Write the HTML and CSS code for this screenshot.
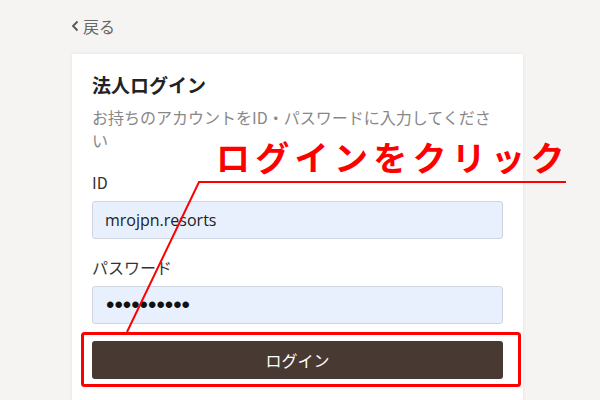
FILE: index.html
```html
<!DOCTYPE html>
<html lang="ja">
<head>
<meta charset="utf-8">
<link rel="stylesheet" href="styles.css">
</head>
<body>
<div class="page">
  <a class="back" href="#"><svg class="chev" width="8" height="12" viewBox="0 0 8 12"><path d="M6.5 1.5 L2 6 L6.5 10.5" fill="none" stroke="#555" stroke-width="1.8"/></svg><span>戻る</span></a>
  <div class="card">
    <h1 class="title">法人ログイン</h1>
    <p class="desc">お持ちのアカウントをID・パスワードに入力してください</p>
    <label class="label">ID</label>
    <div class="input">mrojpn.resorts</div>
    <label class="label pw">パスワード</label>
    <div class="input dots">••••••••••</div>
    <div class="btnwrap"><button class="btn">ログイン</button></div>
  </div>
</div>
<div class="note">ログインをクリック</div>
<svg class="overlay" width="600" height="400" viewBox="0 0 600 400">
  <polyline points="566,182 199,182 127,332" fill="none" stroke="#ff0000" stroke-width="2"/>
  <rect x="82.5" y="333.5" width="437" height="52" rx="2" fill="none" stroke="#ff0000" stroke-width="3"/>
</svg>
</body>
</html>
```
FILE: styles.css
```css
html, body {
  margin: 0;
  padding: 0;
}
body {
  width: 600px;
  height: 400px;
  overflow: hidden;
  background: #f5f4f2;
  font-family: "Noto Sans CJK JP", "Open Sans", sans-serif;
  color: #333;
  position: relative;
}
.page {
  padding: 14px 0 0 70px;
}
.back {
  display: flex;
  align-items: center;
  gap: 4px;
  height: 24px;
  color: #666;
  text-decoration: none;
  font-size: 16px;
  line-height: 24px;
}
.chev {
  margin-left: 1px;
}
.card {
  margin-top: 16px;
  margin-left: 2px;
  width: 411px;
  background: #fff;
  padding: 17px 20px 30px 20px;
  box-shadow: 0 0 3px rgba(0,0,0,0.08);
}
.title {
  margin: 0;
  font-size: 19px;
  font-weight: bold;
  line-height: 28px;
  color: #222;
}
.desc {
  margin: 7px 0 0 0;
  font-size: 16px;
  line-height: 23px;
  color: #888;
}
.label {
  display: block;
  margin-top: 18px;
  font-size: 16px;
  line-height: 24px;
  color: #333;
}
.label.pw {
  margin-top: 16px;
}
.input {
  margin-top: 7px;
  height: 36px;
  box-sizing: content-box;
  background: #e8f0fe;
  border: 1px solid #cfd6e0;
  border-radius: 3px;
  padding: 0 12px;
  font-family: "Open Sans", sans-serif;
  font-size: 16px;
  line-height: 36px;
  color: #222;
}
.input.dots {
  font-family: "Liberation Sans", sans-serif;
  font-size: 24px;
  padding-left: 13px;
  letter-spacing: 0;
  color: #111;
}
.btnwrap {
  margin-top: 17px;
}
.btn {
  display: block;
  width: 100%;
  height: 38px;
  border: none;
  border-radius: 3px;
  background: #483a33;
  color: #fff;
  font-family: "Noto Sans CJK JP", sans-serif;
  font-size: 16px;
}
.note {
  position: absolute;
  left: 216px;
  top: 139px;
  font-size: 34px;
  font-weight: bold;
  line-height: 36px;
  letter-spacing: 5.3px;
  color: #ff0000;
  white-space: nowrap;
}
.overlay {
  position: absolute;
  left: 0;
  top: 0;
}
```
